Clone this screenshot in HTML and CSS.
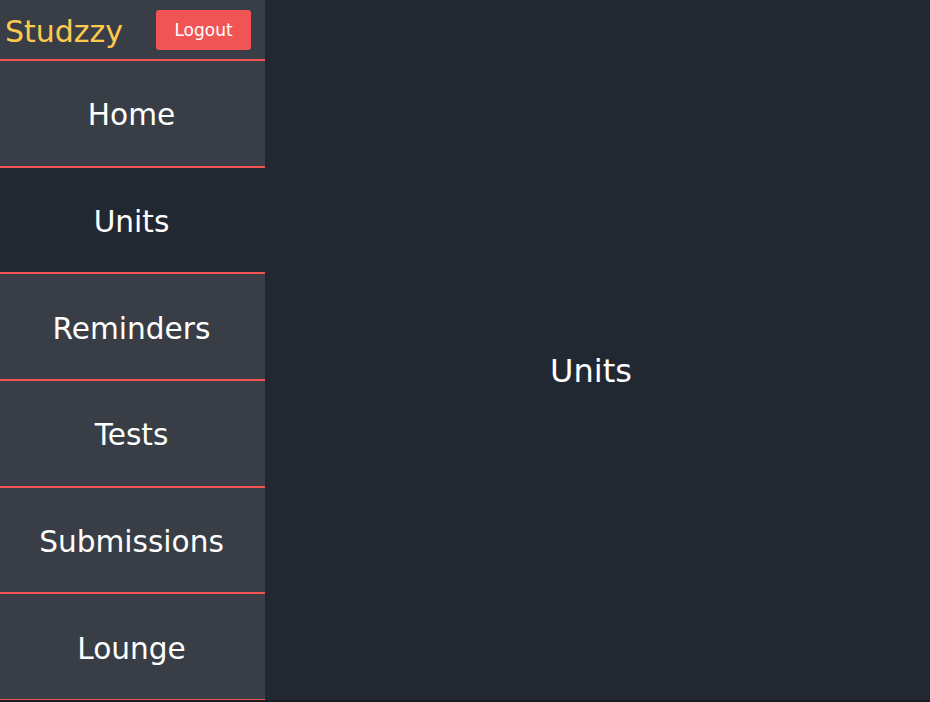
FILE: index.html
```html
<!DOCTYPE html>
<html>
<head>
<meta charset="utf-8">
<link rel="stylesheet" href="styles.css">
</head>
<body>
<div class="app">
  <aside class="sidebar">
    <div class="header">
      <span class="logo">Studzzy</span>
      <button class="logout">Logout</button>
    </div>
    <nav class="nav">
      <div class="item">Home</div>
      <div class="item active">Units</div>
      <div class="item">Reminders</div>
      <div class="item">Tests</div>
      <div class="item">Submissions</div>
      <div class="item">Lounge</div>
    </nav>
  </aside>
  <main class="main">
    <span class="title">Units</span>
  </main>
</div>
</body>
</html>
```
FILE: styles.css
```css
html, body {
  margin: 0;
  padding: 0;
  background: #1b1d21;
  font-family: "DejaVu Sans", sans-serif;
}
.app {
  display: flex;
  height: 700px;
}
.sidebar {
  width: 265px;
  background: #393e46;
  display: flex;
  flex-direction: column;
}
.header {
  height: 59px;
  border-bottom: 2px solid #f05454;
  display: flex;
  align-items: center;
  justify-content: space-between;
  padding: 0 14px 0 5px;
}
.logo {
  color: #ffc94f;
  font-size: 30px;
  line-height: 1;
  padding-top: 5px;
}
.logout {
  width: 95px;
  height: 40px;
  background: #f05454;
  color: #fff;
  border: none;
  border-radius: 3px;
  font-family: "DejaVu Sans", sans-serif;
  font-size: 17px;
  padding: 0;
}
.nav {
  flex: 1;
  display: flex;
  flex-direction: column;
}
.item {
  flex: 1;
  display: flex;
  align-items: center;
  justify-content: center;
  color: #fff;
  font-size: 29.6px;
  padding: 4px 2px 0 0;
  border-bottom: 2px solid #f05454;
}
.item:last-child {
  border-bottom-width: 1px;
}
.item.active {
  background: #222831;
}
.main {
  flex: 1;
  background: #222831;
  display: flex;
  align-items: center;
  justify-content: center;
  padding: 42px 13px 0 0;
}
.title {
  color: #fff;
  font-size: 32px;
}
```
